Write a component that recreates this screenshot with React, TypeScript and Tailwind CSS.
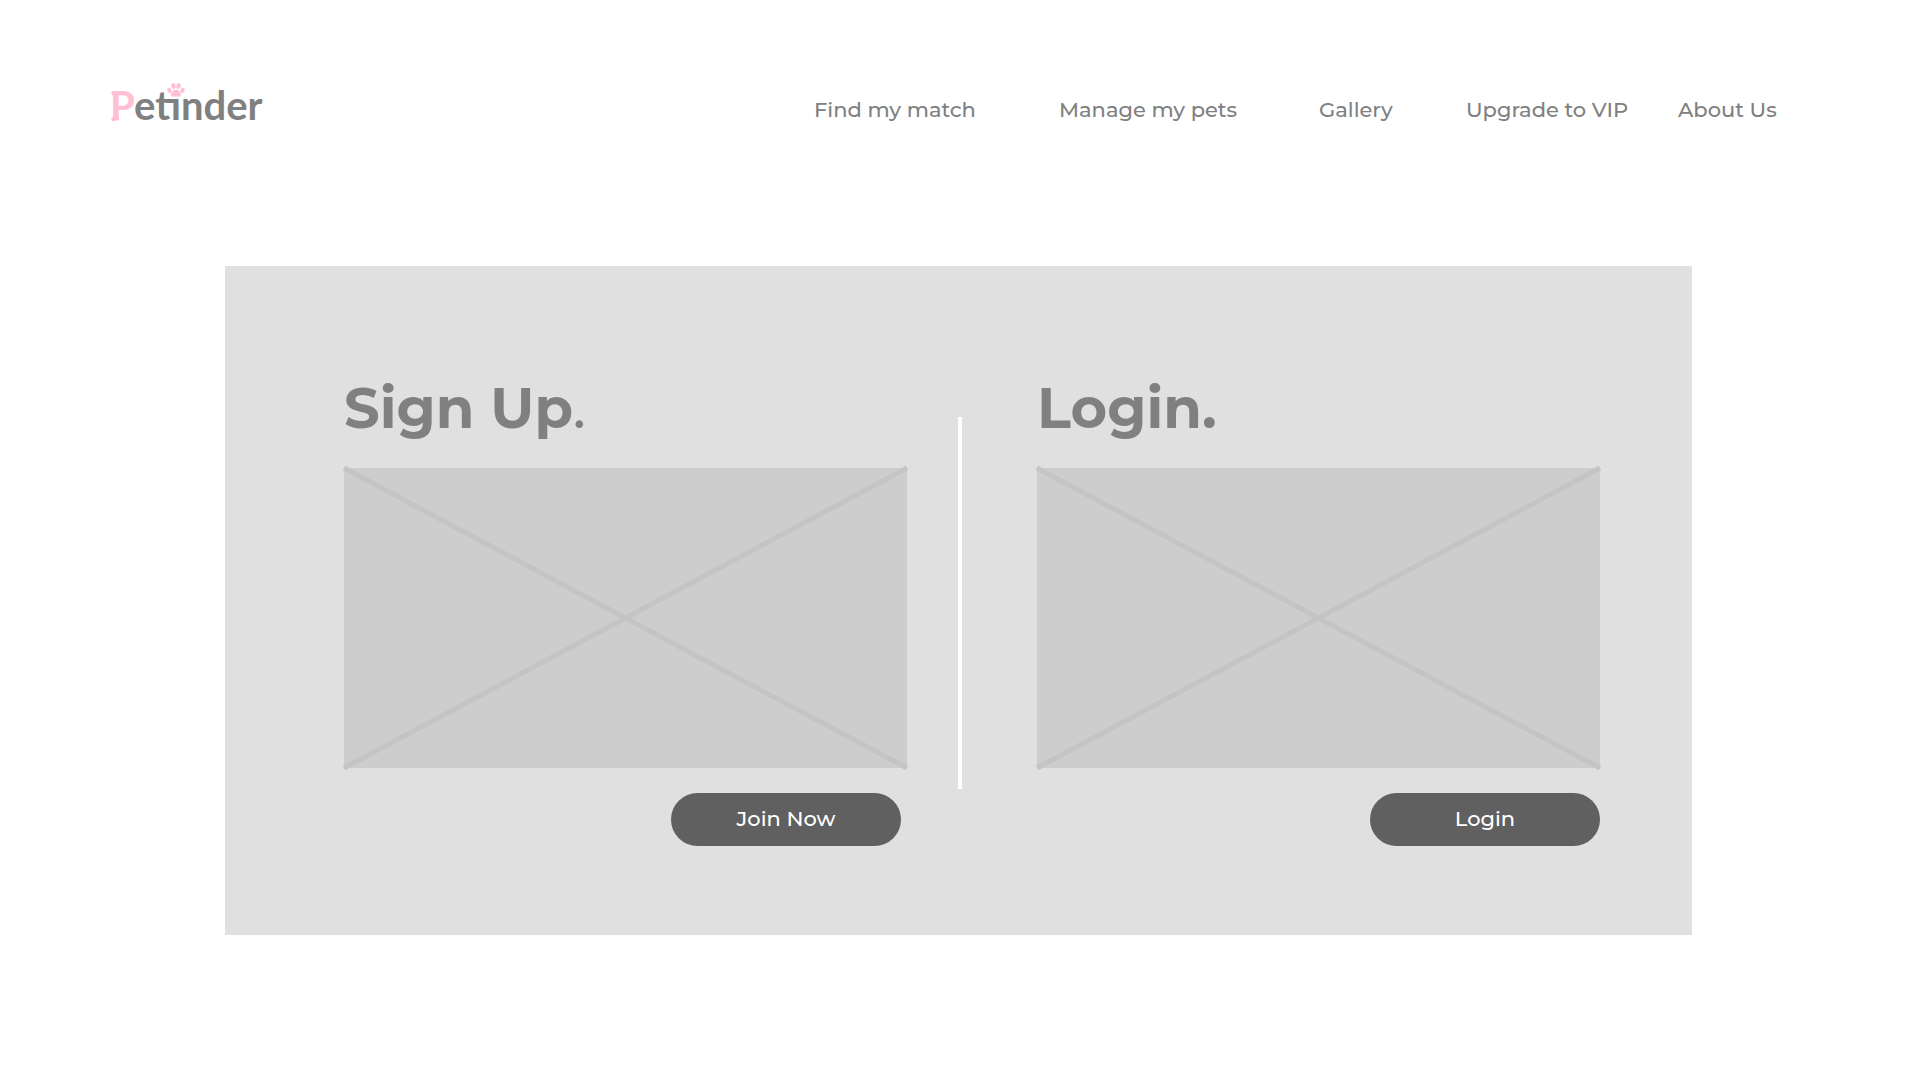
const navItems = ["Find my match", "Manage my pets", "Gallery", "Upgrade to VIP", "About Us"];

function Logo() {
  return (
    <a href="#" aria-label="Petinder" className="block">
      <svg width="156" height="44" viewBox="0 0 156 44" className="block overflow-visible font-['Lato',sans-serif] font-bold">
        <g fill="#ffc0d3">
          <text x="-1" y="37" fontSize="40">P</text>
          <path d="M3 8C0 7-1 12 3 13H8V8Z" />
          <path d="M3 33C0 34-1 39 3 38L8 37V33Z" />
          <ellipse cx="58.500" cy="7.500" rx="2" ry="2.800" transform="rotate(-25 58.500 7.500)" />
          <ellipse cx="62.500" cy="3" rx="2.200" ry="3" transform="rotate(-8 62.500 3)" />
          <ellipse cx="67.500" cy="3" rx="2.200" ry="3" transform="rotate(8 67.500 3)" />
          <ellipse cx="71.500" cy="7.500" rx="2" ry="2.800" transform="rotate(25 71.500 7.500)" />
          <path d="M65 6.500c-2.500 0-5 3.500-5 5.500 0 2.500 2.500 1.500 5 1.500s5 1 5-1.500c0-2-2.500-5.500-5-5.500z" />
        </g>
        <text x="23" y="37" fontSize="40" fill="#808080">etınder</text>
        <path d="M55 17H67V20H55Z" fill="#808080" />
      </svg>
    </a>
  );
}

function Placeholder() {
  return (
    <div className="h-[300px] bg-[#cdcdcd]">
      <svg className="block size-full overflow-visible" viewBox="0 0 563 300" preserveAspectRatio="none" stroke="#c4c4c4" strokeWidth="5" aria-hidden="true">
        <path d="M0 0L563 300M0 300L563 0" />
      </svg>
    </div>
  );
}

function ActionButton({ children }: { children: string }) {
  return (
    <button className="h-[53px] w-[230px] rounded-full bg-[#606060] pb-[2px] text-[21px] font-medium text-white">
      {children}
    </button>
  );
}

export default function App() {
  return (
    <div className="min-h-screen bg-white pb-[146px] font-['Montserrat','Inter',sans-serif] text-[#808080]">
      <header className="flex h-[266px] items-start justify-between pl-[111px] pr-[143px] pt-[83px]">
        <Logo />
        <nav className="mt-[9px] grid grid-cols-[245px_260px_147px_212px_100px] text-[21px] leading-[36px] font-medium whitespace-nowrap">
          {navItems.map((item) => (
            <a key={item} href="#">{item}</a>
          ))}
        </nav>
      </header>
      <main className="mr-[229px] ml-[225px] flex bg-[#e0e0e0] pt-[104px] pr-[92px] pb-[89px] pl-[119px]">
        <section className="flex-1">
          <h1 className="mb-[22px] text-[56px] leading-[76px] font-bold">
            Sign Up<span className="font-medium">.</span>
          </h1>
          <Placeholder />
          <div className="mt-[25px] mr-[6px] flex justify-end">
            <ActionButton>Join Now</ActionButton>
          </div>
        </section>
        <div className="mt-[47px] mr-[75px] ml-[51px] h-[372px] w-[4px] bg-white" />
        <section className="flex-1">
          <h1 className="mb-[22px] text-[56px] leading-[76px] font-bold">Login.</h1>
          <Placeholder />
          <div className="mt-[25px] flex justify-end">
            <ActionButton>Login</ActionButton>
          </div>
        </section>
      </main>
    </div>
  );
}
